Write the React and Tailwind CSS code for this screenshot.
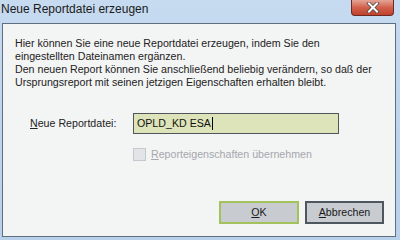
export default function App() {
  return (
    <div className="w-[400px] h-[240px] flex flex-col bg-gradient-to-b from-[#c6daf0] to-[#b8d0ea] font-['Liberation_Sans',Arial,sans-serif] text-[#1e1e1e] overflow-hidden">
      {/* Title bar */}
      <div className="h-[23px] flex items-start justify-between pl-[1px] pr-[6px]">
        <div className="pt-[2px] text-[12px] leading-[14px] text-[#1a1a1a]">Neue Reportdatei erzeugen</div>
        <div className="w-[43px] h-[16px] rounded-b-[4px] border border-t-0 border-[#6b2a22] bg-gradient-to-b from-[#e4a597] via-[#d2604c] to-[#c0412c] flex items-center justify-center">
          <svg width="14" height="11" viewBox="0 0 14 11">
            <path d="M3 1.5 L11 9.5 M11 1.5 L3 9.5" stroke="#4a4a4a" strokeWidth="3.6" strokeLinecap="square" />
            <path d="M3 1.5 L11 9.5 M11 1.5 L3 9.5" stroke="#ffffff" strokeWidth="2" strokeLinecap="square" />
          </svg>
        </div>
      </div>

      {/* Client area */}
      <div className="flex-1 ml-[2px] mr-[4px] mb-[3px] border border-[#5f6f80] bg-[#f3f4f4] flex flex-col text-[10.65px]">
        <div className="pt-[13px] pl-[12px] leading-[13px] whitespace-nowrap text-[#222]">
          <div>Hier können Sie eine neue Reportdatei erzeugen, indem Sie den</div>
          <div>eingestellten Dateinamen ergänzen.</div>
          <div>Den neuen Report können Sie anschließend beliebig verändern, so daß der</div>
          <div>Ursprungsreport mit seinen jetzigen Eigenschaften erhalten bleibt.</div>
        </div>

        <div className="mt-[24px] pl-[27px] flex items-center">
          <div className="w-[103px] text-[#222]">
            <span className="underline">N</span>eue Reportdatei:
          </div>
          <div className="w-[206px] h-[21px] border border-[#50565c] bg-[#dde4ba] flex items-center pl-[3px] text-[#111]">
            <span>OPLD_KD ESA</span>
            <span className="w-px h-[13px] bg-black ml-[1px]" />
          </div>
        </div>

        <div className="mt-[13px] pl-[130px] flex items-center">
          <div className="w-[13px] h-[13px] border border-[#c3c9ce] bg-[#e1e5e8]" />
          <div className="ml-[5px] text-[#a3a8ad]">
            <span className="underline">R</span>eporteigenschaften übernehmen
          </div>
        </div>

        <div className="flex-1" />

        <div className="flex justify-end gap-[6px] pr-[11px] pb-[12px]">
          <button className="w-[80px] h-[23px] border-2 border-[#a4c25c] bg-[#c8cbcf] text-[#1a1a1a] flex items-center justify-center">
            <span><span className="underline">O</span>K</span>
          </button>
          <button className="w-[79px] h-[23px] border-2 border-[#4e5760] bg-[#c8cbcf] text-[#1a1a1a] flex items-center justify-center">
            <span><span className="underline">A</span>bbrechen</span>
          </button>
        </div>
      </div>
    </div>
  );
}
